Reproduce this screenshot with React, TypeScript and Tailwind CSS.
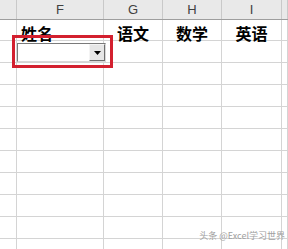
import React from "react";

const colClasses = ["w-[17px]", "w-[87px]", "w-[59px]", "w-[59px]", "w-[60px]", "w-[6px]"];
const headers = ["", "F", "G", "H", "I", ""];
const row1 = ["", "姓名", "语文", "数学", "英语", ""];
const rowClasses = [
  "h-[21px]",
  "h-[22px]",
  "h-[22px]",
  "h-[22px]",
  "h-[22px]",
  "h-[22px]",
  "h-[22px]",
  "h-[22px]",
  "h-[22px]",
  "h-[22px]",
  "h-[22px]",
];

export default function App() {
  return (
    <div className="relative w-[288px] h-[249px] overflow-hidden bg-white font-['Noto_Sans_CJK_SC','Liberation_Sans',sans-serif]">
      <div className="flex h-[20px] bg-[#e9e9e9] border-b border-[#9e9e9e]">
        {colClasses.map((w, i) => (
          <div
            key={i}
            className={
              w +
              " shrink-0 h-full border-r border-[#c9c9c9] flex items-center justify-center text-[13px] text-[#404040] leading-none font-['Liberation_Sans',sans-serif]"
            }
          >
            {headers[i]}
          </div>
        ))}
      </div>
      {rowClasses.map((h, r) => (
        <div key={r} className={"flex " + h}>
          {colClasses.map((w, i) => (
            <div
              key={i}
              className={
                w +
                " shrink-0 h-full border-r border-b border-[#d4d4d4] flex items-end text-[16px] font-bold text-black leading-none " +
                (i === 1 ? "justify-start pl-[4px]" : "justify-center")
              }
            >
              {r === 0 ? <span className="translate-y-[1px]">{row1[i]}</span> : null}
            </div>
          ))}
        </div>
      ))}

      {/* dropdown combobox */}
      <div className="absolute left-[17px] top-[43px] w-[89px] h-[19px] bg-white border border-t-[#7a7a7a] border-l-[#7a7a7a] border-r-[#d8d8d8] border-b-[#d8d8d8] flex justify-end">
        <div className="w-[16px] h-full bg-[#e6e6e6] border border-t-[#f4f4f4] border-l-[#f4f4f4] border-r-[#6e6e6e] border-b-[#6e6e6e] flex items-center justify-center">
          <svg width="7" height="4" viewBox="0 0 7 4">
            <path d="M0 0 H7 L3.5 4 Z" fill="#000" />
          </svg>
        </div>
      </div>

      {/* red highlight */}
      <div className="absolute left-[12px] top-[35px] w-[101px] h-[33px] border-[3px] border-[#d3202f]" />

      {/* watermark */}
      <div className="absolute right-[3px] top-[231px] text-[9px] text-[#a0a0a0] leading-none">
        头条 @Excel学习世界
      </div>
    </div>
  );
}
